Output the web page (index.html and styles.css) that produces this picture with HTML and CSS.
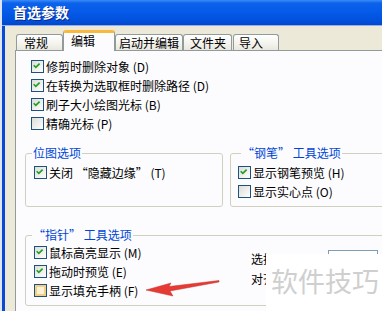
FILE: index.html
```html
<!DOCTYPE html>
<html lang="zh-CN">

<head>
    <meta charset="UTF-8">
    <meta name="viewport" content="width=device-width, initial-scale=1.0">
    <title>首选参数</title>
    <link rel="stylesheet" href="styles.css">
</head>

<body>
    <div class="window">
        <div class="titlebar">首选参数</div>
        <div class="client">
            <div class="tabs">
                <div class="tab tab-general">常规</div>
                <div class="tab tab-edit active">编辑</div>
                <div class="tab tab-launch">启动并编辑</div>
                <div class="tab tab-folder">文件夹</div>
                <div class="tab tab-import">导入</div>
            </div>

            <div class="panel">
                <div class="options">
                    <div class="check"><span class="box"><svg viewBox="0 0 13 13"><polyline points="3,6 5.5,8.5 10,4" /></svg></span>修剪时删除对象 (D)</div>
                    <div class="check"><span class="box"><svg viewBox="0 0 13 13"><polyline points="3,6 5.5,8.5 10,4" /></svg></span>在转换为选取框时删除路径 (D)</div>
                    <div class="check"><span class="box"><svg viewBox="0 0 13 13"><polyline points="3,6 5.5,8.5 10,4" /></svg></span>刷子大小绘图光标 (B)</div>
                    <div class="check"><span class="box"></span>精确光标 (P)</div>
                </div>

                <div class="group-row">
                    <fieldset class="group bitmap">
                        <legend>位图选项</legend>
                        <div class="check"><span class="box"><svg viewBox="0 0 13 13"><polyline points="3,6 5.5,8.5 10,4" /></svg></span>关闭 “隐藏边缘” (T)</div>
                    </fieldset>
                    <fieldset class="group pen">
                        <legend>“钢笔” 工具选项</legend>
                        <div class="check"><span class="box"><svg viewBox="0 0 13 13"><polyline points="3,6 5.5,8.5 10,4" /></svg></span>显示钢笔预览 (H)</div>
                        <div class="check"><span class="box"></span>显示实心点 (O)</div>
                    </fieldset>
                </div>

                <fieldset class="group pointer">
                    <legend>“指针” 工具选项</legend>
                    <div class="pointer-body">
                        <div class="pointer-checks">
                            <div class="check"><span class="box"><svg viewBox="0 0 13 13"><polyline points="3,6 5.5,8.5 10,4" /></svg></span>鼠标高亮显示 (M)</div>
                            <div class="check"><span class="box"><svg viewBox="0 0 13 13"><polyline points="3,6 5.5,8.5 10,4" /></svg></span>拖动时预览 (E)</div>
                            <div class="check"><span class="box hot"></span>显示填充手柄 (F)</div>
                        </div>
                        <div class="pointer-fields">
                            <div class="field"><span class="field-label">选择工具：</span><span class="input"></span></div>
                            <div class="field"><span class="field-label">对齐：</span></div>
                        </div>
                    </div>
                </fieldset>
            </div>
        </div>
    </div>

    <!-- red pointer arrow drawn over the dialog -->
    <svg class="arrow" viewBox="0 0 85 25">
        <path d="M6,14 L31,7 L29,10.5 L79,4.5 L79,6 L30,15 L33,20 Z" />
    </svg>

    <div class="watermark">软件技巧</div>
</body>

</html>
```

FILE: styles.css
```css
html,
body {
    margin: 0;
    padding: 0;
    overflow: hidden;
}

body {
    width: 382px;
    height: 311px;
    position: relative;
    background-color: #dfe6f3;
    font-family: "Noto Sans CJK SC", "Liberation Sans", sans-serif;
    font-size: 12px;
    color: #000;
}

.window {
    margin-left: 2px;
    width: 430px;
    background-color: #0a48d8;
}

.titlebar {
    height: 25px;
    line-height: 25px;
    padding-left: 11px;
    color: #fff;
    font-size: 14px;
    font-weight: bold;
    text-shadow: 1px 1px 0 #0a2a8a;
    background: linear-gradient(to bottom, #3c8cf6 0, #0c62ec 3px, #055ae8 12px, #0050dc 21px, #0646c8 25px);
    border-bottom: 1px solid #8fb0ea;
}

.client {
    margin-left: 3px;
    padding-left: 10px;
    background-color: #ece9d8;
}

.tabs {
    display: flex;
    align-items: flex-end;
    height: 24px;
    padding-left: 1px;
}

.tab {
    box-sizing: border-box;
    height: 16px;
    line-height: 15px;
    border: 1px solid #919b9c;
    border-bottom: none;
    border-radius: 3px 3px 0 0;
    background: linear-gradient(to bottom, #ffffff, #f3f2ec 60%, #e9e7de);
    white-space: nowrap;
}

.tab.active {
    position: relative;
    z-index: 1;
    height: 21px;
    margin-bottom: -1px;
    line-height: 16px;
    background: #fcfcfe;
    border-top: 3px solid #f9b93c;
}

.tab-general {
    width: 47px;
    padding-left: 7px;
}

.tab-edit {
    width: 52px;
    padding-left: 7px;
}

.tab-launch {
    width: 68px;
    padding-left: 3px;
}

.tab-folder {
    width: 49px;
    padding-left: 6px;
}

.tab-import {
    width: 46px;
    margin-left: 1px;
    padding-left: 5px;
}

.panel {
    height: 270px;
    padding: 6px 0 0 9px;
    background-color: #fcfcfe;
    border-top: 1px solid #919b9c;
    border-left: 1px solid #919b9c;
}

.options {
    padding-left: 6px;
}

.check {
    display: flex;
    align-items: center;
    height: 19px;
    white-space: nowrap;
}

.box {
    box-sizing: border-box;
    width: 13px;
    height: 13px;
    margin-right: 2px;
    flex-shrink: 0;
    border: 1px solid #1c5180;
    background: linear-gradient(135deg, #dcdcd7, #ffffff);
}

.box svg {
    display: block;
    width: 11px;
    height: 11px;
    margin: 0;
}

.box polyline {
    fill: none;
    stroke: #21a121;
    stroke-width: 2;
    transform: translate(-1px, -1px);
}

.box.hot {
    background: #fbf1d6;
    box-shadow: inset 0 0 0 2px #f3cf84;
}

.group-row {
    display: flex;
    gap: 7px;
    margin-top: 13px;
}

.group {
    margin: 0;
    padding: 3px 0 5px 8px;
    border: 1px solid #d0d0bf;
    border-radius: 3px;
}

.group legend {
    margin-left: -2px;
    padding: 0 1px;
    line-height: 14px;
    color: #0046d5;
}

.bitmap {
    width: 198px;
    box-sizing: border-box;
}

.pen {
    flex: 1;
    padding-left: 7px;
}

.pen legend {
    margin-left: 3px;
}

.pointer {
    margin-top: 21px;
    padding-top: 1px;
    margin-right: -40px;
}

.pointer-body {
    display: flex;
}

.pointer-checks {
    width: 217px;
}

.pointer-fields {
    padding-top: 5px;
}

.field {
    display: flex;
    align-items: center;
    height: 20px;
}

.field-label {
    width: 77px;
}

.input {
    box-sizing: border-box;
    width: 50px;
    height: 20px;
    margin-top: 4px;
    border: 1px solid #7f9db9;
    background-color: #fff;
}

.arrow {
    position: absolute;
    left: 140px;
    top: 276px;
    width: 85px;
    height: 25px;
}

.arrow path {
    fill: #e63b35;
    stroke: #c9302c;
    stroke-width: 0.5;
}

.watermark {
    position: absolute;
    left: 266px;
    top: 254px;
    width: 116px;
    height: 57px;
    padding: 13px 0 0 5px;
    box-sizing: border-box;
    background-color: #fff;
    color: #cfcfcf;
    font-size: 27px;
    line-height: 27px;
    white-space: nowrap;
}
```
